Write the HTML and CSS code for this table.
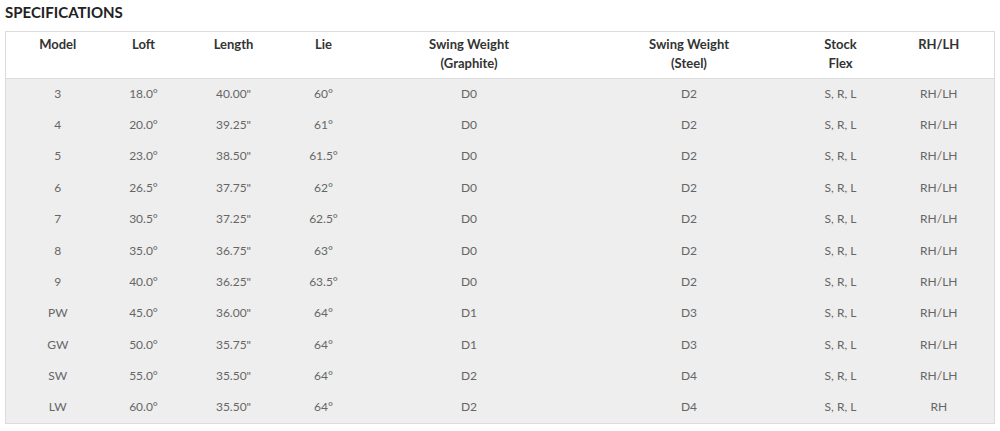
FILE: index.html
```html
<!DOCTYPE html>
<html>
<head>
<meta charset="utf-8">
<link rel="stylesheet" href="styles.css">
</head>
<body>
<div class="specs">
  <h2 class="specs-title">SPECIFICATIONS</h2>
  <table class="spec-table">
    <colgroup>
      <col class="c-model"><col class="c-loft"><col class="c-length"><col class="c-lie">
      <col class="c-graphite"><col class="c-steel"><col class="c-flex"><col class="c-hand">
    </colgroup>
    <thead>
      <tr>
        <th>Model</th><th>Loft</th><th>Length</th><th>Lie</th>
        <th>Swing Weight<br>(Graphite)</th><th>Swing Weight<br>(Steel)</th>
        <th>Stock<br>Flex</th><th>RH/LH</th>
      </tr>
    </thead>
    <tbody>
      <tr><td>3</td><td>18.0°</td><td>40.00"</td><td>60°</td><td>D0</td><td>D2</td><td>S, R, L</td><td>RH/LH</td></tr>
      <tr><td>4</td><td>20.0°</td><td>39.25"</td><td>61°</td><td>D0</td><td>D2</td><td>S, R, L</td><td>RH/LH</td></tr>
      <tr><td>5</td><td>23.0°</td><td>38.50"</td><td>61.5°</td><td>D0</td><td>D2</td><td>S, R, L</td><td>RH/LH</td></tr>
      <tr><td>6</td><td>26.5°</td><td>37.75"</td><td>62°</td><td>D0</td><td>D2</td><td>S, R, L</td><td>RH/LH</td></tr>
      <tr><td>7</td><td>30.5°</td><td>37.25"</td><td>62.5°</td><td>D0</td><td>D2</td><td>S, R, L</td><td>RH/LH</td></tr>
      <tr><td>8</td><td>35.0°</td><td>36.75"</td><td>63°</td><td>D0</td><td>D2</td><td>S, R, L</td><td>RH/LH</td></tr>
      <tr><td>9</td><td>40.0°</td><td>36.25"</td><td>63.5°</td><td>D0</td><td>D2</td><td>S, R, L</td><td>RH/LH</td></tr>
      <tr><td>PW</td><td>45.0°</td><td>36.00"</td><td>64°</td><td>D1</td><td>D3</td><td>S, R, L</td><td>RH/LH</td></tr>
      <tr><td>GW</td><td>50.0°</td><td>35.75"</td><td>64°</td><td>D1</td><td>D3</td><td>S, R, L</td><td>RH/LH</td></tr>
      <tr><td>SW</td><td>55.0°</td><td>35.50"</td><td>64°</td><td>D2</td><td>D4</td><td>S, R, L</td><td>RH/LH</td></tr>
      <tr><td>LW</td><td>60.0°</td><td>35.50"</td><td>64°</td><td>D2</td><td>D4</td><td>S, R, L</td><td>RH</td></tr>
    </tbody>
  </table>
</div>
</body>
</html>
```
FILE: styles.css
```css
html, body {
  margin: 0;
  padding: 0;
  background: #ffffff;
}
body {
  font-family: Lato, "Open Sans", "Liberation Sans", sans-serif;
  color: #333;
}
.specs {
  padding: 0 5px;
}
.specs-title {
  margin: 0;
  padding-top: 2px;
  height: 29px;
  font-size: 15px;
  line-height: 20px;
  font-weight: 700;
  color: #222;
  letter-spacing: 0;
}
.spec-table {
  width: 989px;
  table-layout: fixed;
  border-collapse: collapse;
  border: 1px solid #dcdcdc;
}
.c-model { width: 104px; }
.c-loft { width: 68px; }
.c-length { width: 112px; }
.c-lie { width: 68px; }
.c-graphite { width: 223px; }
.c-steel { width: 217px; }
.c-flex { width: 86px; }
.c-hand { width: 111px; }
.spec-table th {
  background: #fff;
  font-size: 13px;
  font-weight: 700;
  line-height: 19px;
  color: #333;
  vertical-align: top;
  text-align: center;
  padding: 3px 0 5px;
  border-bottom: 1px solid #dcdcdc;
}
.spec-table tbody {
  background: #eeeeee;
}
.spec-table tbody tr {
  height: 31.4px;
}
.spec-table td {
  font-size: 12px;
  line-height: 19px;
  color: #666;
  text-align: center;
  padding: 0 0 2px;
  vertical-align: middle;
}
```
